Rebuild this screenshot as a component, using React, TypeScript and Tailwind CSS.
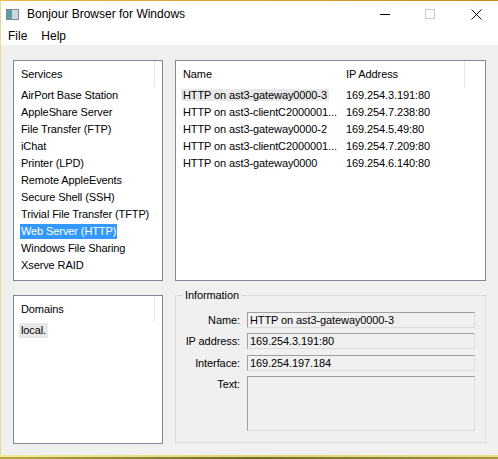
import React from "react";

const services = [
  "AirPort Base Station",
  "AppleShare Server",
  "File Transfer (FTP)",
  "iChat",
  "Printer (LPD)",
  "Remote AppleEvents",
  "Secure Shell (SSH)",
  "Trivial File Transfer (TFTP)",
  "Web Server (HTTP)",
  "Windows File Sharing",
  "Xserve RAID",
];

const rows = [
  ["HTTP on ast3-gateway0000-3", "169.254.3.191:80"],
  ["HTTP on ast3-clientC2000001...", "169.254.7.238:80"],
  ["HTTP on ast3-gateway0000-2", "169.254.5.49:80"],
  ["HTTP on ast3-clientC2000001...", "169.254.7.209:80"],
  ["HTTP on ast3-gateway0000", "169.254.6.140:80"],
];

function Field({ label, value, tall }: { label: string; value: string; tall?: boolean }) {
  return (
    <div className="flex items-start">
      <div className="w-[71px] text-right pr-[7px] leading-[16px] whitespace-nowrap">{label}</div>
      <div
        className={`w-[228px] ${tall ? "h-[55px]" : "h-[16px]"} border-t border-l border-t-[#a0a0a0] border-l-[#a0a0a0] border-b border-r border-b-[#dcdcdc] border-r-[#dcdcdc] pl-[2px] leading-[14px] whitespace-nowrap`}
      >
        {value}
      </div>
    </div>
  );
}

export default function App() {
  return (
    <div className="w-[498px] h-[459px] flex flex-col bg-[#f0f0f0] overflow-hidden font-['Liberation_Sans',Arial,sans-serif] text-[11px] tracking-[-0.1px] text-black">
      <div className="h-[1px] bg-gradient-to-r from-[#e8b84a] via-[#d9a030] to-[#c48a20]" />
      <div className="flex flex-1 min-h-0">
        <div className="w-[1px] bg-[#e6dc8e]" />
        <div className="flex-1 flex flex-col min-w-0">
          {/* Title bar */}
          <div className="h-[26px] bg-white flex items-center relative">
            <svg className="ml-[5px]" width="13" height="11" viewBox="0 0 13 11">
              <rect x="0.5" y="0.5" width="12" height="10" fill="#e8eef0" stroke="#7a8a90" />
              <rect x="1" y="1" width="5" height="9" fill="#5aa0a0" />
              <rect x="6" y="1" width="6" height="9" fill="#d0d8dc" />
            </svg>
            <span className="ml-[8px] text-[12px] tracking-normal">Bonjour Browser for Windows</span>
            <div className="absolute left-[379px] top-[13px] w-[10px] h-[1px] bg-black" />
            <div className="absolute left-[424px] top-[8px] w-[10px] h-[10px] border border-[#c8c8c8]" />
            <svg className="absolute left-[470px] top-[8px]" width="11" height="11" viewBox="0 0 11 11">
              <path d="M0.5 0.5 L10.5 10.5 M10.5 0.5 L0.5 10.5" stroke="#111" strokeWidth="1" />
            </svg>
          </div>
          {/* Menu bar */}
          <div className="h-[18px] bg-white flex items-center text-[12px] tracking-normal">
            <span className="ml-[7px]">File</span>
            <span className="ml-[14px]">Help</span>
          </div>
          {/* Body */}
          <div className="flex-1 flex gap-[12px] pl-[12px] pt-[15px]">
            {/* Left column */}
            <div className="w-[150px] flex flex-col gap-[14px]">
              <div className="h-[221px] bg-white border border-[#828790] flex flex-col">
                <div className="h-[26px] flex items-center relative">
                  <span className="pl-[7px]">Services</span>
                  <div className="absolute left-[140px] top-0 w-[1px] h-[26px] bg-[#e5e5e5]" />
                </div>
                {services.map((s) => (
                  <div key={s} className="h-[17px] flex items-center pl-[6px]">
                    <span
                      className={`px-[1px] leading-[15px] whitespace-nowrap ${
                        s === "Web Server (HTTP)" ? "bg-[#3399ff] text-white" : ""
                      }`}
                    >
                      {s}
                    </span>
                  </div>
                ))}
              </div>
              <div className="h-[149px] bg-white border border-[#828790] flex flex-col">
                <div className="h-[26px] flex items-center relative">
                  <span className="pl-[7px]">Domains</span>
                  <div className="absolute left-[140px] top-0 w-[1px] h-[26px] bg-[#e5e5e5]" />
                </div>
                <div className="h-[17px] flex items-center pl-[5px]">
                  <span className="px-[2px] leading-[15px] bg-[#e8e8e8]">local.</span>
                </div>
              </div>
            </div>
            {/* Right column */}
            <div className="w-[311px] flex flex-col gap-[14px]">
              <div className="h-[221px] bg-white border border-[#828790] flex flex-col">
                <div className="h-[26px] flex items-center relative">
                  <span className="pl-[7px] w-[170px]">Name</span>
                  <span>IP Address</span>
                  <div className="absolute left-[288px] top-0 w-[1px] h-[26px] bg-[#e5e5e5]" />
                </div>
                {rows.map(([n, ip], i) => (
                  <div key={i} className="h-[17px] flex items-center">
                    <div className="w-[170px] pl-[5px]">
                      <span className={`px-[2px] leading-[15px] whitespace-nowrap ${i === 0 ? "bg-[#e8e8e8]" : ""}`}>
                        {n}
                      </span>
                    </div>
                    <span className="whitespace-nowrap">{ip}</span>
                  </div>
                ))}
              </div>
              <div className="h-[148px] border border-[#dcdcdc] relative pt-[16px]">
                <span className="absolute left-[6px] top-[-8px] bg-[#f0f0f0] px-[3px] leading-[14px]">
                  Information
                </span>
                <div className="flex flex-col">
                  <Field label="Name:" value="HTTP on ast3-gateway0000-3" />
                  <div className="h-[5px]" />
                  <Field label="IP address:" value="169.254.3.191:80" />
                  <div className="h-[6px]" />
                  <Field label="Interface:" value="169.254.197.184" />
                  <div className="h-[5px]" />
                  <Field label="Text:" value="" tall />
                </div>
              </div>
            </div>
          </div>
          <div className="h-[2px]" />
        </div>
      </div>
      <div className="h-[2px] bg-gradient-to-r from-[#f2ec9a] via-[#e4d870] to-[#eadf8a]" />
      <div className="h-[2px] bg-gradient-to-r from-[#b8a840] via-[#6e6a30] to-[#a89a40]" />
    </div>
  );
}
